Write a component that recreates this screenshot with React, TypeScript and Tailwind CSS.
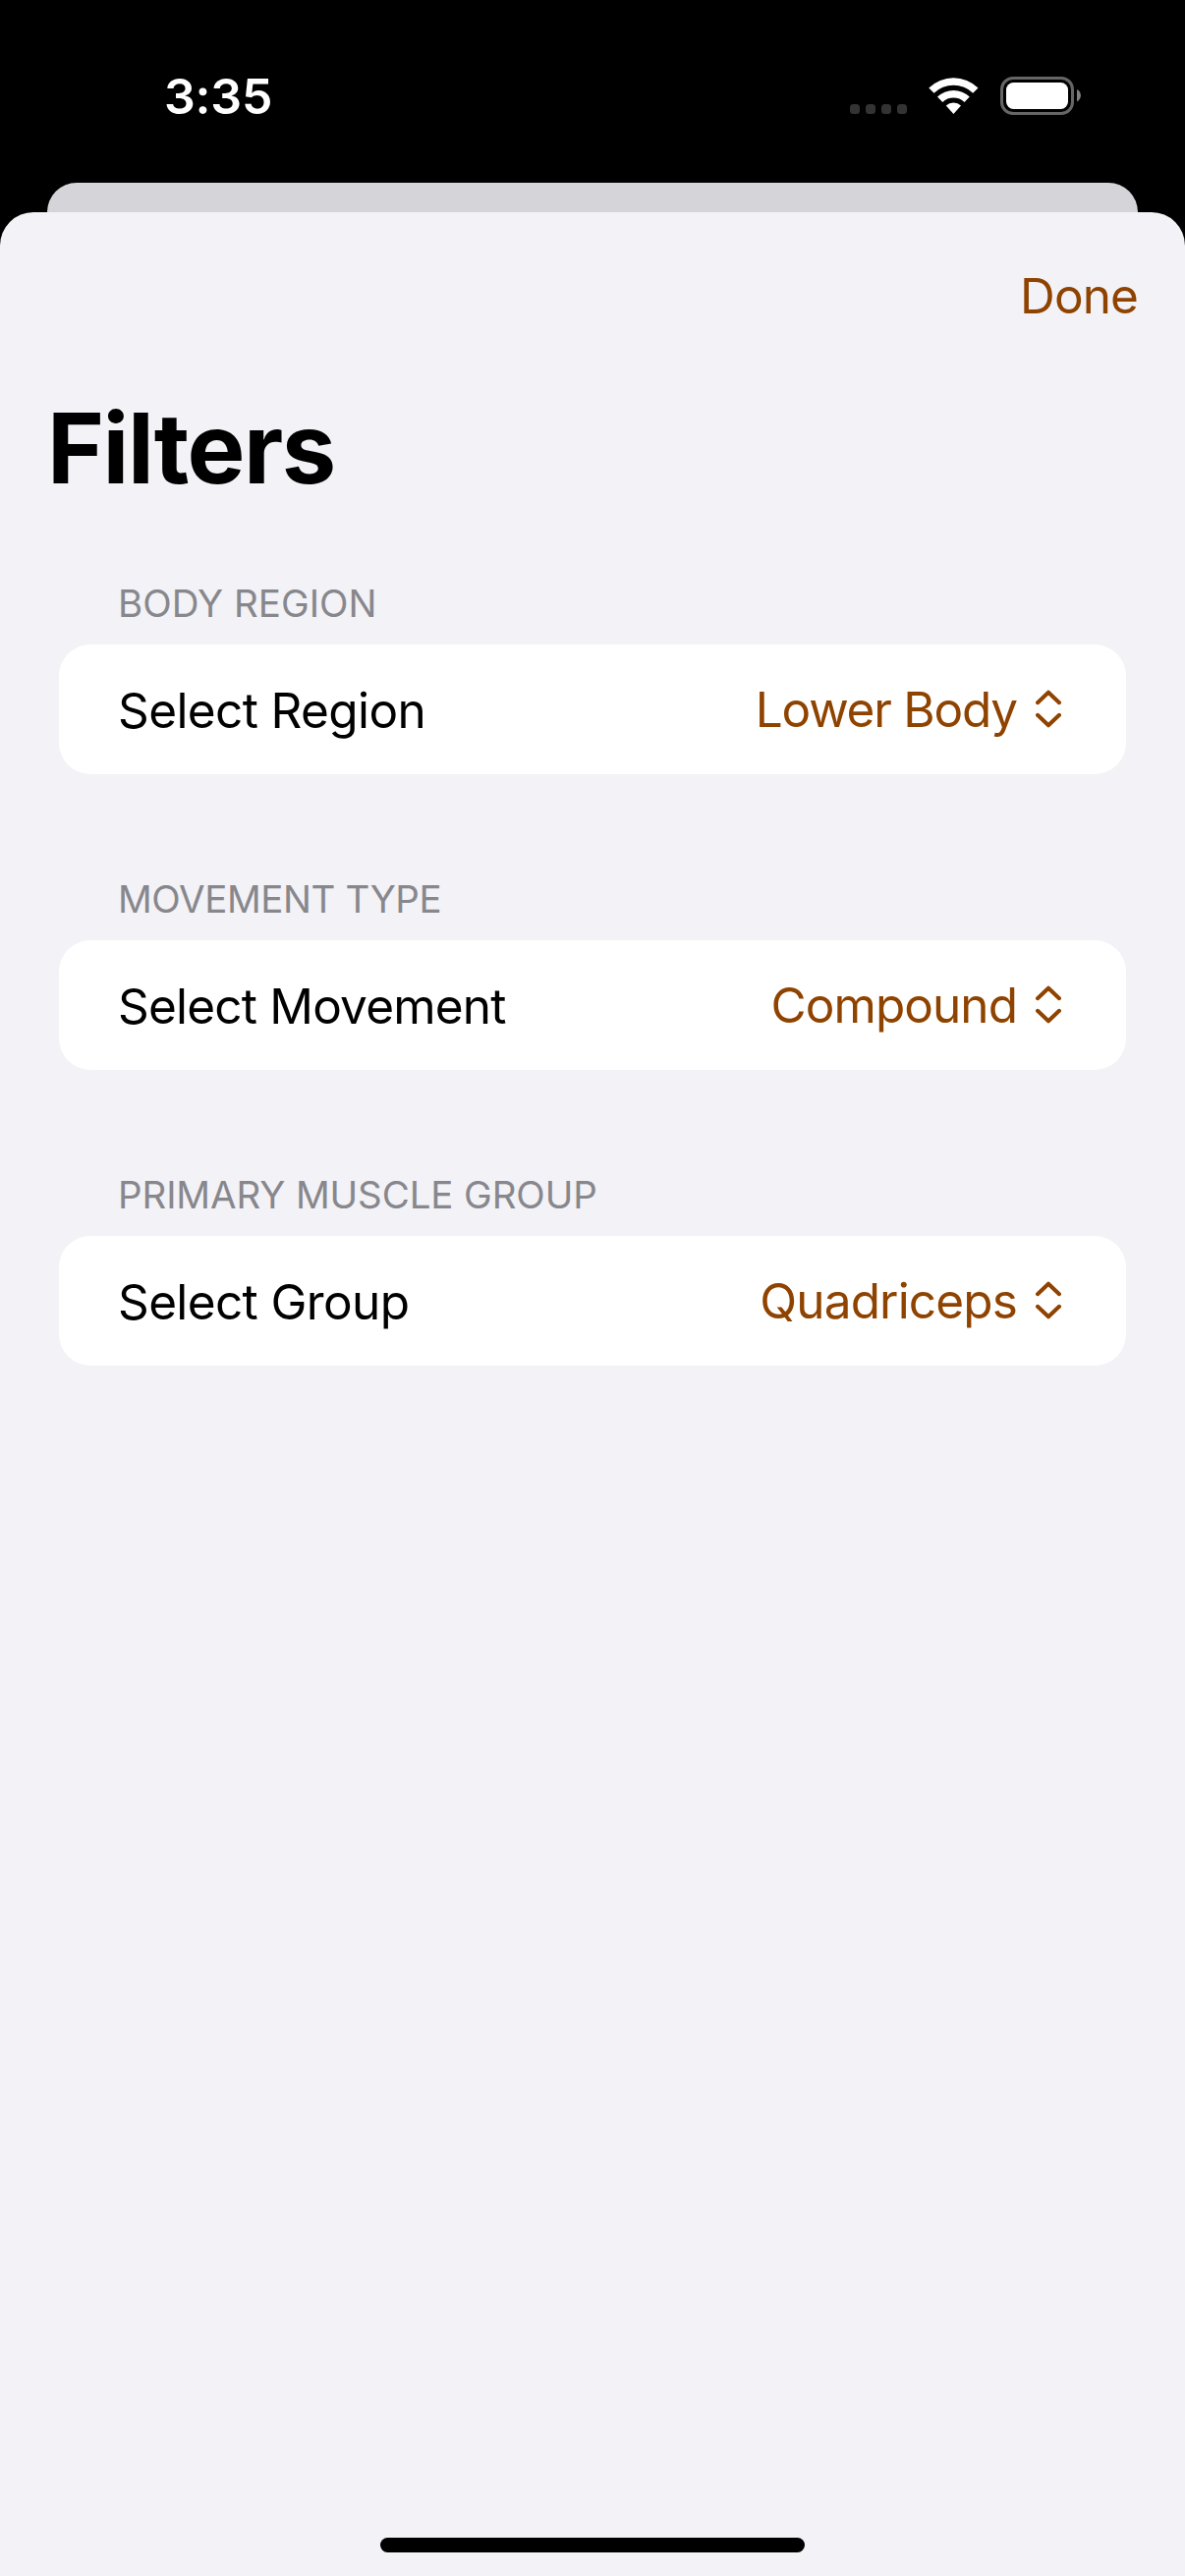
const sections = [
  {
    header: "BODY REGION",
    label: "Select Region",
    value: "Lower Body",
    headerTracking: "tracking-normal",
    labelTracking: "tracking-[-0.62px]",
    valueTracking: "tracking-[-1.2px]",
  },
  {
    header: "MOVEMENT TYPE",
    label: "Select Movement",
    value: "Compound",
    headerTracking: "tracking-[-0.42px]",
    labelTracking: "tracking-[-0.8px]",
    valueTracking: "tracking-[-0.95px]",
  },
  {
    header: "PRIMARY MUSCLE GROUP",
    label: "Select Group",
    value: "Quadriceps",
    headerTracking: "tracking-[-0.12px]",
    labelTracking: "tracking-[-0.63px]",
    valueTracking: "tracking-[-0.85px]",
  },
];

function StatusBar() {
  return (
    <div className="flex h-[186px] items-start justify-between pl-[167px] pr-[105px] text-white">
      <span className="mt-[68px] text-[50px] leading-[60px] font-semibold tracking-[-0.2px]">3:35</span>
      <svg className="mt-[78px]" width="236" height="39" viewBox="865 78 236 39" fill="none">
        <g fill="#333">
          <rect x="865" y="106" width="10" height="10" rx="3.5" />
          <rect x="881" y="106" width="10" height="10" rx="3.5" />
          <rect x="897" y="106" width="10" height="10" rx="3.5" />
          <rect x="913" y="106" width="10" height="10" rx="3.5" />
        </g>
        <g fill="#fff">
          <path d="M945.3 89.5a36 36 0 0 1 50.2 0l-5.3 5.2a28.5 28.5 0 0 0-39.6 0z" />
          <path d="M954 98.6a23.5 23.5 0 0 1 32.8 0l-5.3 5.3a16 16 0 0 0-22.2 0z" />
          <path d="M962.8 107.6a11 11 0 0 1 15.2 0l-7.6 8.4z" />
        </g>
        <rect x="1019.5" y="79.5" width="72" height="36" rx="11.5" stroke="#666" strokeWidth="3" />
        <rect x="1024" y="84" width="63" height="27" rx="7.5" fill="#fff" />
        <path d="M1096 91v12.4c5.2-2.4 5.2-10 0-12.4z" fill="#808080" />
      </svg>
    </div>
  );
}

function ChevronUpDown() {
  return (
    <svg
      className="ml-[19px] tracking-normal"
      width="26"
      height="40"
      viewBox="0 0 26 40"
      fill="none"
      stroke="currentColor"
      strokeWidth="4"
      strokeLinecap="round"
      strokeLinejoin="round"
    >
      <path d="M2 13.2 13 2.7l11 10.5M2 25.8l11 10.5 11-10.5" />
    </svg>
  );
}

export default function App() {
  return (
    <div className="flex h-[2622px] w-[1206px] flex-col bg-black font-['Inter',sans-serif] text-black">
      <StatusBar />
      <div className="mx-[48px] h-[30px] rounded-t-[30px] bg-[#d5d4d9]" />
      <main className="flex flex-1 flex-col rounded-t-[34px] bg-[#f2f2f7]">
        <div className="mt-[55px] flex justify-end pr-[48px]">
          <button className="text-[49.5px] leading-[60px] tracking-[-0.9px] text-[#8f4300]">Done</button>
        </div>
        <h1 className="mt-[65px] pl-[48px] text-[99px] leading-[120px] font-bold tracking-[-1.5px]">Filters</h1>
        <div className="mt-[64px] flex flex-col gap-[93px] px-[60px]">
          {sections.map((s) => (
            <section key={s.header}>
              <h2 className={`h-[76px] pl-[60px] pt-[10px] text-[38.5px] leading-[48px] text-[#88878c] ${s.headerTracking}`}>
                {s.header}
              </h2>
              <div className="flex h-[132px] items-center justify-between rounded-[32px] bg-white pl-[60px] pr-[66px] text-[49.5px] leading-[60px]">
                <span className={`pt-[2px] ${s.labelTracking}`}>{s.label}</span>
                <span className={`flex items-center text-[#8f4300] ${s.valueTracking}`}>
                  {s.value}
                  <ChevronUpDown />
                </span>
              </div>
            </section>
          ))}
        </div>
        <div className="mx-auto mt-auto mb-[24px] h-[15px] w-[432px] rounded-full bg-black" />
      </main>
    </div>
  );
}
